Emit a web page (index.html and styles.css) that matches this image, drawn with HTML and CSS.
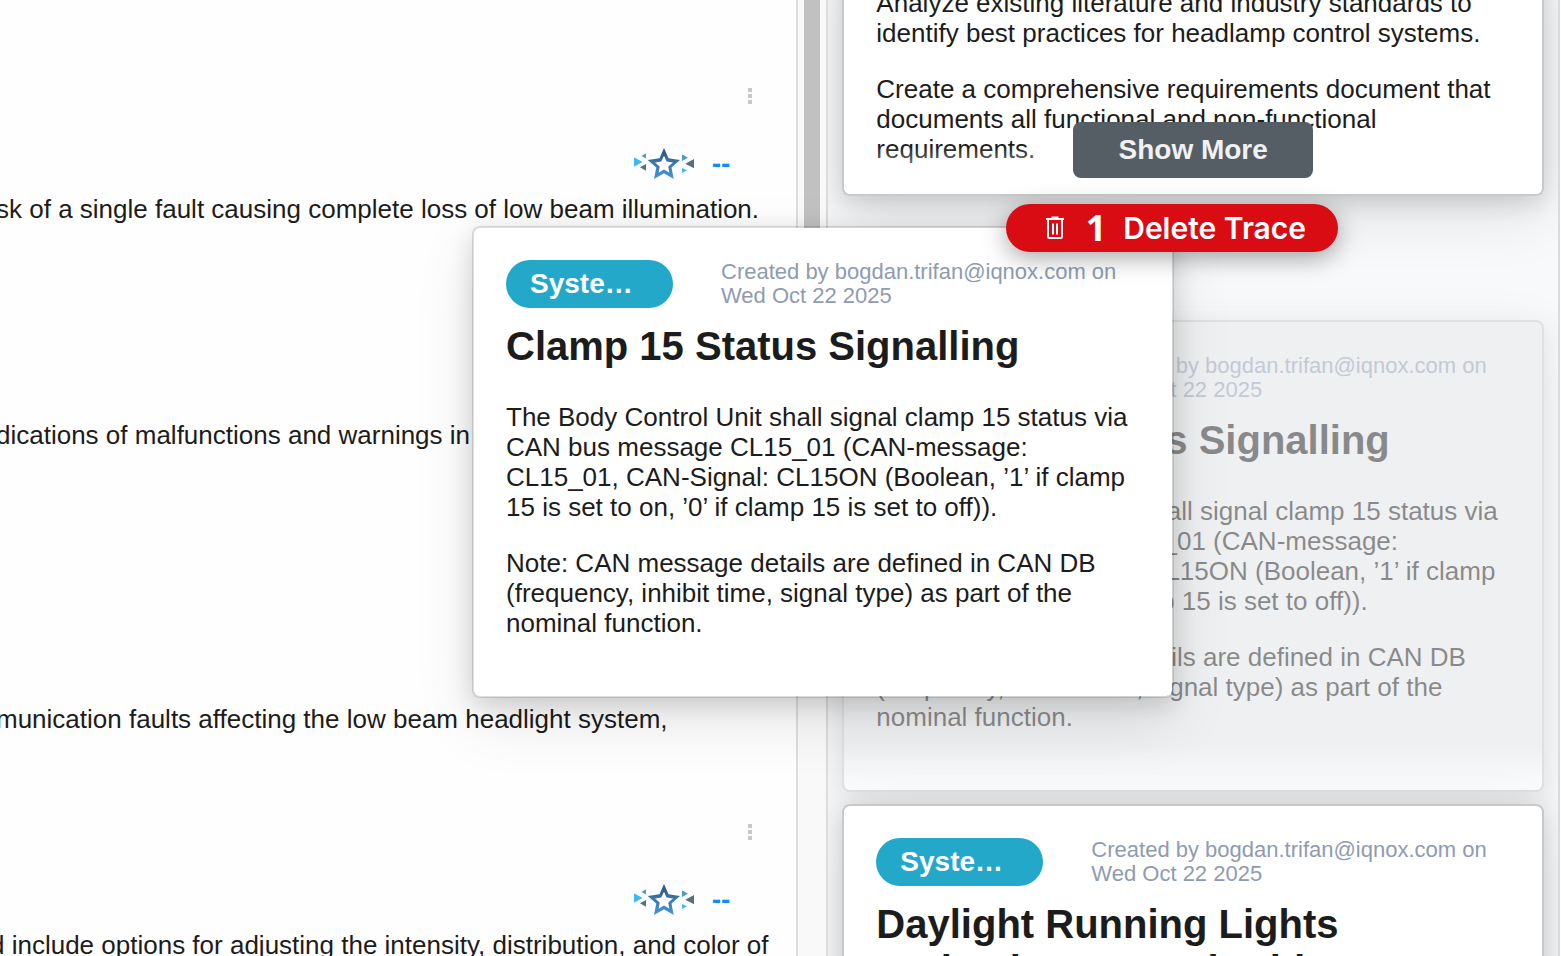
FILE: index.html
```html
<!DOCTYPE html>
<html lang="en">
<head>
<meta charset="utf-8">
<title>Requirement traces</title>
<link rel="stylesheet" href="styles.css">
</head>
<body>
<svg class="defs" aria-hidden="true">
  <defs>
    <linearGradient id="star-fill" x1="0" y1="0" x2="0" y2="1">
      <stop offset="0" stop-color="#2f4f73"/><stop offset=".5" stop-color="#3b78ae"/><stop offset="1" stop-color="#4496d2"/>
    </linearGradient>
    <symbol id="spark" viewBox="0 0 60 32">
      <path fill="#3dbcec" d="M0 9.300 8.500 14 0 18.700ZM48 20 53 22.300 48 25Z"/>
      <path fill="#4f9bca" d="M7.300 8 12 5.300V10.500ZM48 6.300 54 9.700 48 13Z"/>
      <path fill="#557084" d="M6 19.300 12 16V22.700ZM51.300 15.700 60 11V20.300Z"/>
      <path fill="url(#star-fill)" fill-rule="evenodd" d="M30 0 34.500 10.200 46 12 37.500 19.500 39.700 31 30 25.300 20 31 22.300 19.500 13.700 12 25.500 10.200ZM30 7.800 27.300 13.400 21 14.500 25.700 18.600 24.600 24.800 30 21.600 35.300 24.800 34.300 18.600 39 14.500 32.600 13.400Z"/>
    </symbol>
    <symbol id="dots" viewBox="0 0 6 18">
      <path fill="#c9c9c9" d="M1 1h4v4H1zM1 7h4v4H1zM1 13h4v4H1z"/>
    </symbol>
  </defs>
</svg>

<div class="workspace">
  <main class="document">
    <section class="row">
      <button class="menu" aria-label="Row menu"><svg width="6" height="18"><use href="#dots"/></svg></button>
      <div class="trace"><svg width="60" height="32"><use href="#spark"/></svg><a href="#">--</a></div>
      <p class="line">sk of a single fault causing complete loss of low beam illumination.</p>
    </section>
    <section class="row tall">
      <button class="menu" aria-label="Row menu"><svg width="6" height="18"><use href="#dots"/></svg></button>
      <div class="trace"><svg width="60" height="32"><use href="#spark"/></svg><a href="#">--</a></div>
      <p class="line">dications of malfunctions and warnings in</p>
    </section>
    <section class="row">
      <button class="menu" aria-label="Row menu"><svg width="6" height="18"><use href="#dots"/></svg></button>
      <div class="trace"><svg width="60" height="32"><use href="#spark"/></svg><a href="#">--</a></div>
      <p class="line">munication faults affecting the low beam headlight system,</p>
    </section>
    <section class="row">
      <button class="menu" aria-label="Row menu"><svg width="6" height="18"><use href="#dots"/></svg></button>
      <div class="trace"><svg width="60" height="32"><use href="#spark"/></svg><a href="#">--</a></div>
      <p class="line scrolled">d include options for adjusting the intensity, distribution, and color of</p>
    </section>
  </main>
  <div class="scrollbar"><div class="thumb"></div></div>
  <aside class="panel">
    <article class="card first">
      <p>Analyze existing literature and industry standards to identify best practices for headlamp control systems.</p>
      <p>Create a comprehensive requirements document that documents all functional and non-functional requirements.</p>
      <button class="more">Show More</button>
    </article>
    <article class="card ghost">
      <header><span class="tag">Syste…</span><span class="meta">Created by bogdan.trifan@iqnox.com on Wed Oct 22 2025</span></header>
      <h2>Clamp 15 Status Signalling</h2>
      <p>The Body Control Unit shall signal clamp 15 status via CAN bus message CL15_01 (CAN-message: CL15_01, CAN-Signal: CL15ON (Boolean, ’1’ if clamp 15 is set to on, ’0’ if clamp 15 is set to off)).</p>
      <p>Note: CAN message details are defined in CAN DB (frequency, inhibit time, signal type) as part of the nominal function.</p>
    </article>
    <article class="card">
      <header><span class="tag">Syste…</span><span class="meta">Created by bogdan.trifan@iqnox.com on Wed Oct 22 2025</span></header>
      <h2>Daylight Running Lights Activation on Both Sides’</h2>
    </article>
  </aside>
</div>

<article class="card dragged">
  <header><span class="tag">Syste…</span><span class="meta">Created by bogdan.trifan@iqnox.com on Wed Oct 22 2025</span></header>
  <h2>Clamp 15 Status Signalling</h2>
  <p>The Body Control Unit shall signal clamp 15 status via CAN bus message CL15_01 (CAN-message: CL15_01, CAN-Signal: CL15ON (Boolean, ’1’ if clamp 15 is set to on, ’0’ if clamp 15 is set to off)).</p>
  <p>Note: CAN message details are defined in CAN DB (frequency, inhibit time, signal type) as part of the nominal function.</p>
</article>

<button class="delete">
  <svg width="20" height="24" viewBox="0 0 20 24" fill="none" stroke="#fff" stroke-width="2"><path d="M1 3H19M6.500 1.500H13.500M3 4V20.500Q3 22 4.500 22H15.500Q17 22 17 20.500V4M8 7.500V18.500M12 7.500V18.500"/></svg>
  <span class="count">1</span><span>Delete Trace</span>
</button>
</body>
</html>
```
FILE: styles.css
```css
* { box-sizing: border-box; }
body {
  margin: 0;
  height: 100vh;
  overflow: hidden;
  position: relative;
  background: #fefefe;
  color: #1c1c1c;
  font: 26px/30px "Liberation Sans", Arial, sans-serif;
}
p, h2 { margin: 0; }
button { border: 0; font-family: inherit; cursor: pointer; }
.defs { position: absolute; width: 0; height: 0; }

.workspace { display: flex; height: 100vh; overflow: hidden; }

.document {
  flex: 1;
  min-width: 0;
  overflow: hidden;
  padding-top: 84px;
  border-right: 2px solid #dedede;
}
.row { display: flex; flex-direction: column; align-items: flex-end; height: 226px; }
.row.tall { height: 284px; }
.menu { display: flex; align-items: center; height: 24px; padding: 0; margin-right: 43px; background: none; }
.trace { display: flex; align-items: center; gap: 18px; margin: 40px 66px 14px 0; }
.trace a { color: #128cf5; font-size: 28px; font-weight: bold; text-decoration: none; }
.line { align-self: flex-start; margin-left: -4px; white-space: nowrap; }
.line.scrolled { margin-left: -10px; }

.scrollbar { width: 28px; flex: none; padding: 0 6px; background: #f9f9f9; }
.thumb { width: 16px; height: 240px; background: #c1c1c1; }

.panel {
  flex: none;
  width: 47%;
  display: flex;
  flex-direction: column;
  gap: 12px;
  overflow: hidden;
  margin-right: 1px;
  padding: 0 14px;
  border: solid #d9dbdd;
  border-width: 0 2px;
  background: #f8f9fb;
}
.card {
  position: relative;
  flex: none;
  padding: 32px 32px 58px;
  border: 2px solid #c9c9c9;
  border-radius: 8px;
  background: #fff;
  box-shadow: 0 20px 60px rgba(0, 0, 0, .1), 0 6px 24px rgba(0, 0, 0, .14);
}
.card header { display: flex; gap: 48px; }
.card h2 { margin: 15px 0 33px; font-size: 40px; line-height: 46px; }
.card p + p { margin-top: 26px; }
.tag {
  flex: none;
  width: 167px;
  height: 48px;
  padding: 0 24px;
  border-radius: 24px;
  background: #23a8ca;
  color: #fff;
  font-size: 28px;
  font-weight: bold;
  line-height: 48px;
}
.meta { color: #8f9bb0; font-size: 22px; line-height: 24px; }

.first { margin: -46px 0 112px; padding-bottom: 30px; }
.first::after, .ghost::after {
  content: "";
  position: absolute;
  inset: auto 0 0;
  height: 48px;
  border-radius: 0 0 6px 6px;
  background: linear-gradient(rgba(255, 255, 255, 0), #fff);
}
.more {
  position: absolute;
  z-index: 1;
  left: 50%;
  bottom: 16px;
  width: 240px;
  height: 56px;
  margin-left: -120px;
  border-radius: 8px;
  background: #555e64;
  color: #f0f1f2;
  font-size: 28px;
  font-weight: bold;
}
.ghost { opacity: .5; background: #e7e8e9; }

.dragged {
  position: absolute;
  left: 472px;
  top: 226px;
  width: 702px;
  border-color: rgba(0, 0, 0, .12);
  background-clip: padding-box;
  box-shadow: 0 24px 60px rgba(0, 0, 0, .1), 0 6px 24px rgba(0, 0, 0, .14);
}

.delete {
  position: absolute;
  left: 1006px;
  top: 204px;
  display: flex;
  align-items: center;
  justify-content: flex-end;
  width: 332px;
  height: 48px;
  padding: 0 32px;
  border-radius: 24px;
  background: #d90c14;
  box-shadow: 0 6px 24px rgba(0, 0, 0, .35);
  color: #fff;
  font: 600 30px/48px Inter, sans-serif;
}
.delete svg { margin-right: 21px; }
.count { margin-right: 17px; font: bold 36px/48px "Noto Sans", sans-serif; }
```
